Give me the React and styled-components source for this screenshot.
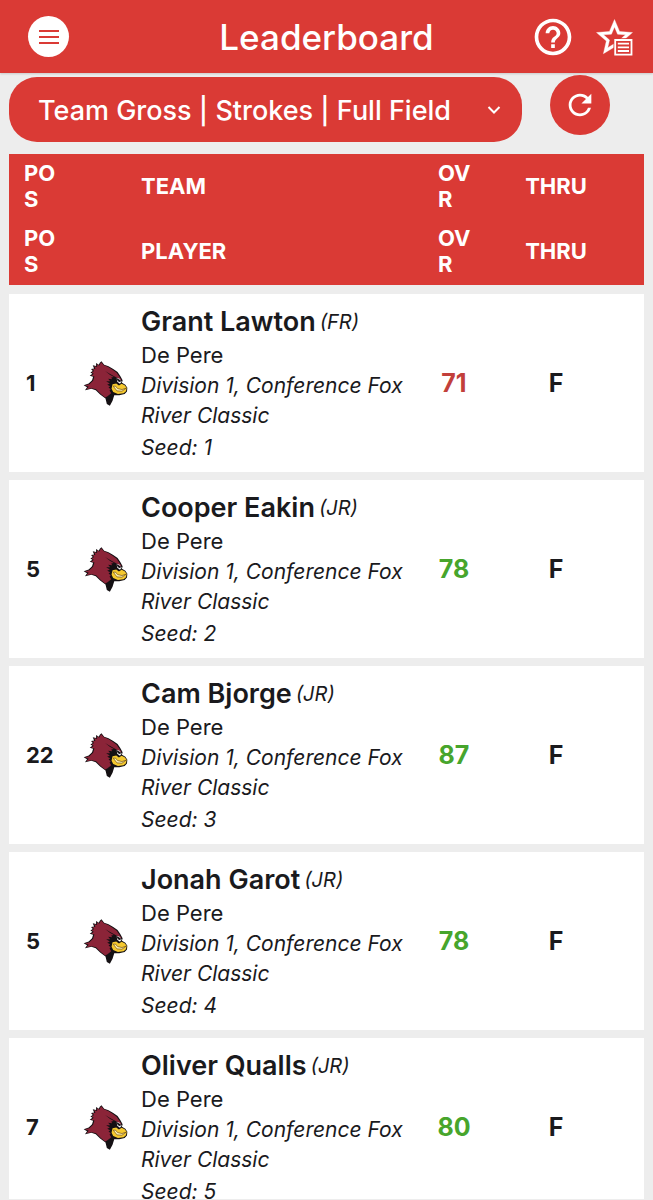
import React from "react";
import styled, { createGlobalStyle } from "styled-components";
import { MdHelpOutline, MdRefresh } from "react-icons/md";

const RED = "#da3a35";
const GREY = "#ededed";
const INK = "#1a1a1d";

const GlobalStyle = createGlobalStyle`
  *, *::before, *::after { box-sizing: border-box; }
  body {
    margin: 0;
    background: ${GREY};
    color: ${INK};
    font-family: Inter, "Liberation Sans", sans-serif;
  }
`;

const Shell = styled.div`
  height: 100vh;
  display: flex;
  flex-direction: column;
  padding-bottom: 1px;
`;

const TopBar = styled.header`
  flex: none;
  display: grid;
  grid-template-columns: 1fr auto 1fr;
  align-items: center;
  height: 73px;
  padding: 0 17px;
  background: ${RED};
  color: #fff;
  box-shadow: 0 1px 2px rgba(0, 0, 0, 0.15);
`;

const Title = styled.h1`
  margin: 0;
  font-size: 35px;
  line-height: 44px;
  font-weight: 500;
`;

const Actions = styled.div`
  display: flex;
  align-items: center;
  justify-content: ${(p) => (p.$end ? "flex-end" : "flex-start")};
  gap: 17px;
  padding-left: ${(p) => (p.$end ? 0 : 11)}px;
`;

const IconButton = styled.button`
  display: flex;
  align-items: center;
  justify-content: center;
  padding: 0;
  border: 0;
  border-radius: 50%;
  width: ${(p) => p.$size}px;
  height: ${(p) => p.$size}px;
  background: ${(p) => p.$fill || "transparent"};
  color: ${(p) => p.$ink || "#fff"};
  cursor: pointer;
`;

const Content = styled.main`
  flex: 1;
  min-height: 0;
  overflow-y: auto;
  scrollbar-width: none;
  padding: 2px 9px 0;
`;

const Filters = styled.div`
  display: flex;
  align-items: flex-start;
  gap: 28px;
  padding-right: 34px;
  height: 79px;
`;

const SelectBox = styled.label`
  position: relative;
  flex: 1;
  margin-top: 2px;
`;

const Select = styled.select`
  appearance: none;
  display: block;
  width: 100%;
  height: 65px;
  padding: 2px 60px 0 29px;
  border: 0;
  border-radius: 28px;
  background: ${RED};
  color: #fff;
  font: 500 27px/32px Inter, "Liberation Sans", sans-serif;
`;

const Chevron = styled.svg`
  position: absolute;
  right: 20px;
  top: 25px;
  pointer-events: none;
`;

const Board = styled.table`
  width: 100%;
  table-layout: fixed;
  border-collapse: separate;
  border-spacing: 0;
`;

const Col = styled.col`
  width: ${(p) => p.$width};
`;

const HeadCell = styled.th`
  padding: 6px ${(p) => p.$right || 0}px 7px ${(p) => p.$left || 0}px;
  background: ${RED};
  color: #fff;
  font-size: 22px;
  line-height: 26px;
  font-weight: 700;
  text-align: ${(p) => p.$align || "left"};
  word-break: break-all;
`;

const Head = styled.thead`
  tr:last-child > * { border-bottom: 1px solid ${RED}; }
`;

const Cell = styled.td`
  padding: 0;
  border-top: 8px solid ${GREY};
  background: #fff;
  text-align: ${(p) => p.$align || "left"};

  tr:first-child > & { border-top-width: 9px; }
`;

const PositionCell = styled(Cell)`
  padding-left: 17px;
  font-size: 22px;
  font-weight: 700;
`;

const LogoCell = styled(Cell)`
  padding-left: 14px;
  svg { display: block; }
`;

const PlayerCell = styled(Cell)`
  padding: 10px 0 9px;
`;

const ScoreCell = styled(Cell)`
  font-size: 25px;
  font-weight: 700;
  color: ${(p) => p.$color || INK};
`;

const PlayerName = styled.div`
  display: flex;
  align-items: center;
  gap: 4px;
  line-height: 36px;
  font-size: 27px;
  font-weight: 600;
`;

const Grade = styled.em`
  font-size: 20px;
  font-weight: 400;
`;

const School = styled.div`
  font-size: 22px;
  line-height: 31px;
`;

const Detail = styled.div`
  font-style: italic;
  font-size: 21px;
  line-height: 30px;
`;

const Seed = styled(Detail)`
  margin-top: 2px;
`;

const players = [
  { pos: 1, name: "Grant Lawton", grade: "FR", score: 71, under: true },
  { pos: 5, name: "Cooper Eakin", grade: "JR", score: 78 },
  { pos: 22, name: "Cam Bjorge", grade: "JR", score: 87 },
  { pos: 5, name: "Jonah Garot", grade: "JR", score: 78 },
  { pos: 7, name: "Oliver Qualls", grade: "JR", score: 80 },
];

const MenuIcon = () => (
  <svg width="20" height="16" viewBox="0 0 20 16" fill="currentColor" aria-hidden="true">
    <path d="M0 1h20v2H0zM0 7h20v2H0zM0 13h20v2H0z" />
  </svg>
);

const StarListIcon = () => (
  <svg width="38" height="38" viewBox="0 0 38 38" aria-hidden="true">
    <path
      transform="translate(-2.1 -2.1) scale(1.8)"
      fill="#fff" stroke="#fff" strokeWidth="0.2"
      d="M22 9.24l-7.19-.62L12 2 9.190 8.630 2 9.240l5.460 4.730L5.820 21 12 17.270 18.180 21l-1.630-7.030L22 9.240zM12 15.400l-3.760 2.270 1-4.280-3.320-2.880 4.380-.38L12 6.100l1.710 4.040 4.380.38-3.320 2.880 1 4.280L12 15.400z"
    />
    <path d="M18.500 20.200h19.500v17.800h-19.500z" fill={RED} />
    <path d="M20.200 22h16.300v14.600h-16.300z" fill={RED} stroke="#fff" strokeWidth="1.8" />
    <path d="M22.800 25.600h11.200M22.800 29.300h11.200M22.800 33h11.200" stroke="#fff" strokeWidth="1.8" />
  </svg>
);

const Cardinal = () => (
  <svg width="45" height="45" viewBox="250 210 134 134" role="img" aria-label="De Pere Redbirds">
    <path
      d="M305 211 313 221 326 226 340 234 353 243 361 255 368 267 366 275 376 281 382 290 381 301 374 308 358 312 343 312 338 328 330 343 321 338 317 322 301 310 288 297 275 293 256 297 262 288 252 282 267 277 277 267 280 257 270 254 278 248 272 244 279 240 274 234 283 232 279 223 289 225 289 216 297 221 300 215Z"
      fill="#141013"
    />
    <path
      d="M304 214 312 223 325 228 338 236 350 245 358 256 364 266 363 272 354 261 340 254 328 247 316 240 330 251 342 258 334 259 337 264 325 263 331 270 319 270 330 277 322 281 331 285 326 289 333 294 329 298 334 306 323 315 316 319 303 308 289 294 276 291 260 294 267 287 256 282 269 279 280 269 284 256 275 254 282 248 276 244 283 240 278 235 287 233 283 225 292 228 292 219 298 224Z"
      fill="#8b2438"
    />
    <path d="M350 260 359 263 365 272 360 278 352 272Z" fill="#fff" />
    <path d="M348 259 363 268 361 273 354 270Z" fill="#141013" />
    <path
      d="M338 279 349 277 357 283 365 278 374 282 380 290 378 300 371 306 354 308 340 302 335 293Z"
      fill="#f5c92f"
    />
    <path d="M340 285 347 285 353 292 366 295 378 291 366 300 351 299Z" fill="#fff3b0" stroke="#6d4a12" strokeWidth="2" />
  </svg>
);

function HeadRow({ label }) {
  return (
    <tr>
      <HeadCell scope="col" $left={15} $right={8}>POS</HeadCell>
      <HeadCell scope="col" colSpan={2} $left={72}>{label}</HeadCell>
      <HeadCell scope="col" $left={18} $right={12}>OVR</HeadCell>
      <HeadCell scope="col" $align="center">THRU</HeadCell>
      <HeadCell as="td" />
    </tr>
  );
}

function PlayerRow({ player, seed }) {
  return (
    <tr>
      <PositionCell>{player.pos}</PositionCell>
      <LogoCell><Cardinal /></LogoCell>
      <PlayerCell>
        <PlayerName>{player.name}<Grade>({player.grade})</Grade></PlayerName>
        <School>De Pere</School>
        <Detail>Division 1, Conference Fox River Classic</Detail>
        <Seed>Seed: {seed}</Seed>
      </PlayerCell>
      <ScoreCell $align="center" $color={player.under ? "#c23f3b" : "#47a52c"}>{player.score}</ScoreCell>
      <ScoreCell $align="center">F</ScoreCell>
      <Cell />
    </tr>
  );
}

export default function App() {
  return (
    <Shell>
      <GlobalStyle />
      <TopBar>
        <Actions>
          <IconButton $size={41} $fill="#fff" $ink={RED} aria-label="Menu"><MenuIcon /></IconButton>
        </Actions>
        <Title>Leaderboard</Title>
        <Actions $end>
          <IconButton $size={44} aria-label="Help"><MdHelpOutline size={44} /></IconButton>
          <IconButton $size={44} aria-label="Favorites list"><StarListIcon /></IconButton>
        </Actions>
      </TopBar>
      <Content>
        <Filters>
          <SelectBox>
            <Select aria-label="Leaderboard view" defaultValue="gross">
              <option value="gross">Team Gross | Strokes | Full Field</option>
            </Select>
            <Chevron width="16" height="16" viewBox="0 0 16 16" fill="none" stroke="#fff" strokeWidth="2" aria-hidden="true">
              <path d="M2.5 5 8 10.500 13.500 5" />
            </Chevron>
          </SelectBox>
          <IconButton $size={60} $fill={RED} aria-label="Refresh"><MdRefresh size={34} /></IconButton>
        </Filters>
        <Board>
          <colgroup>
            <Col $width="60px" />
            <Col $width="72px" />
            <Col />
            <Col $width="68px" />
            <Col $width="136px" />
            <Col $width="20px" />
          </colgroup>
          <Head>
            <HeadRow label="TEAM" />
            <HeadRow label="PLAYER" />
          </Head>
          <tbody>
            {players.map((player, i) => (
              <PlayerRow key={player.name} player={player} seed={i + 1} />
            ))}
          </tbody>
        </Board>
      </Content>
    </Shell>
  );
}
